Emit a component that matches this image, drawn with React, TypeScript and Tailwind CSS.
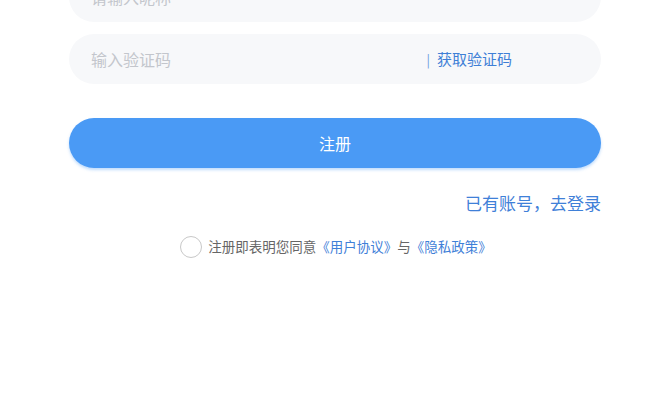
import React, { useState } from 'react';

export default function App() {
  const [agreed, setAgreed] = useState(false);

  return (
    <div
      className="h-[415px] w-full overflow-hidden bg-white px-[69px]"
      style={{ fontFamily: '"Noto Sans CJK SC", "Noto Sans", sans-serif' }}
    >
      <div className="-mt-[28px] flex h-[50px] items-center rounded-full bg-[#f7f8fa] px-[22px]">
        <input
          className="w-full bg-transparent text-[16px] text-[#333] outline-none placeholder:text-[#c3c6cc]"
          placeholder="请输入昵称"
        />
      </div>

      <div className="mt-[12px] flex h-[50px] items-center rounded-full bg-[#f7f8fa] pl-[22px] pr-[89px]">
        <input
          className="min-w-0 flex-1 bg-transparent text-[16px] text-[#333] outline-none placeholder:text-[#c3c6cc]"
          placeholder="输入验证码"
        />
        <span className="text-[15px] text-[#3f7fd6]">
          <span className="mr-[7px] text-[13px] text-[#6a9ce0]">|</span>获取验证码
        </span>
      </div>

      <button className="mt-[34px] flex h-[50px] w-full items-center justify-center rounded-full bg-[#4a9af5] text-[16px] text-white shadow-[0_2px_3px_rgba(74,154,245,0.35)]">
        注册
      </button>

      <div className="mt-[22px] flex justify-end">
        <span className="text-[17px] text-[#3f80d8]">已有账号，去登录</span>
      </div>

      <div className="mt-[20px] flex items-center justify-center pl-[2px]">
        <button
          onClick={() => setAgreed(!agreed)}
          className={`mr-[6px] h-[22px] w-[22px] rounded-full border ${agreed ? 'border-[#4a9af5] bg-[#4a9af5]' : 'border-[#c8c8c8] bg-white'}`}
        />
        <span className="text-[13.5px] text-[#666]">
          注册即表明您同意<span className="text-[#3f80d8]">《用户协议》</span>与<span className="text-[#3f80d8]">《隐私政策》</span>
        </span>
      </div>
    </div>
  );
}
